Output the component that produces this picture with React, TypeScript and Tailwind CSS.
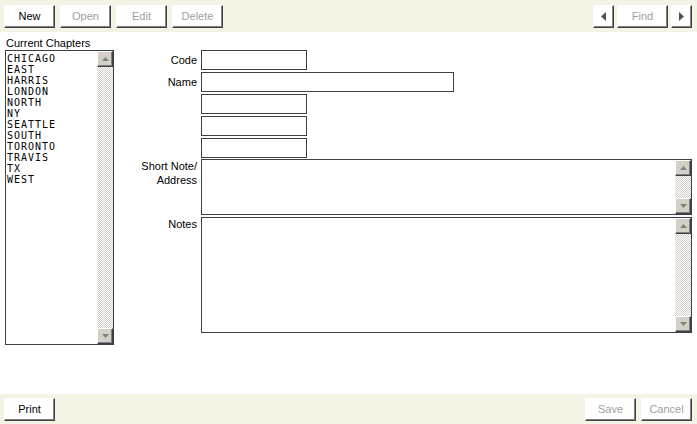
const chapters = ["CHICAGO", "EAST", "HARRIS", "LONDON", "NORTH", "NY", "SEATTLE", "SOUTH", "TORONTO", "TRAVIS", "TX", "WEST"];

const font = { fontFamily: '"Liberation Sans", Arial, sans-serif' };

const Btn = ({ label, disabled, wide = true }: { label: string; disabled?: boolean; wide?: boolean }) => (
  <button
    className={`${wide ? "w-[51px]" : "w-[21px]"} h-[23px] flex items-center justify-center bg-white border border-t-white border-l-white border-r-[#404040] border-b-[#404040] shadow-[inset_-1px_-1px_0_#808080] text-[11px] ${disabled ? "text-[#a0a0a0]" : "text-black"}`}
  >
    {label}
  </button>
);

const Arrow = ({ dir }: { dir: "left" | "right" }) => (
  <button className="w-[21px] h-[23px] flex items-center justify-center bg-white border border-t-white border-l-white border-r-[#404040] border-b-[#404040] shadow-[inset_-1px_-1px_0_#808080]">
    <svg width="5" height="9" viewBox="0 0 5 9">
      {dir === "left" ? <path d="M5 0 L0 4.5 L5 9 Z" fill="#505050" /> : <path d="M0 0 L5 4.5 L0 9 Z" fill="#505050" />}
    </svg>
  </button>
);

const ScrollBtn = ({ up }: { up?: boolean }) => (
  <div className="w-[16px] h-[16px] shrink-0 bg-[#d4d0c8] border border-t-white border-l-white border-r-[#404040] border-b-[#404040] shadow-[inset_-1px_-1px_0_#808080] flex items-center justify-center">
    <svg width="7" height="4" viewBox="0 0 7 4">
      {up ? <path d="M0 4 L3.5 0 L7 4 Z" fill="#808080" /> : <path d="M0 0 L3.5 4 L7 0 Z" fill="#808080" />}
    </svg>
  </div>
);

const ScrollBar = () => (
  <div className="w-[16px] flex flex-col shrink-0">
    <ScrollBtn up />
    <div className="flex-1 bg-[repeating-conic-gradient(#d4d0c8_0%_25%,#ffffff_0%_50%)] bg-[length:2px_2px]" />
    <ScrollBtn />
  </div>
);

const Area = ({ h }: { h: string }) => (
  <div className={`${h} flex border border-[#404040] bg-white`}>
    <div className="flex-1" />
    <ScrollBar />
  </div>
);

export default function App() {
  return (
    <div className="w-[697px] h-[424px] flex flex-col bg-white text-black" style={font}>
      {/* top toolbar */}
      <div className="h-[32px] shrink-0 bg-[#f5f2e6] flex items-start pt-[5px] px-[4px]">
        <div className="flex gap-[5px]">
          <Btn label="New" />
          <Btn label="Open" disabled />
          <Btn label="Edit" disabled />
          <Btn label="Delete" disabled />
        </div>
        <div className="ml-auto mr-[1px] flex gap-[3px]">
          <Arrow dir="left" />
          <Btn label="Find" disabled />
          <Arrow dir="right" />
        </div>
      </div>

      {/* body */}
      <div className="flex-1 flex">
        <div className="pl-[5px] pt-[4px]">
          <div className="text-[11px] leading-[14px] pl-[1px]">Current Chapters</div>
          <div className="w-[109px] h-[295px] flex border border-[#404040]">
            <div className="flex-1 pl-[1px] pt-[2px] text-[10px] tracking-[1px] leading-[11px]" style={{ fontFamily: '"DejaVu Sans Mono", monospace' }}>
              {chapters.map((c) => (
                <div key={c}>{c}</div>
              ))}
            </div>
            <ScrollBar />
          </div>
        </div>

        <div className="flex-1 pt-[18px] pr-[5px] grid grid-cols-[83px_1fr] gap-x-[4px] gap-y-[2px] content-start text-[11px]">
          <div className="text-right self-center">Code</div>
          <input className="w-[106px] h-[20px] border border-[#404040] bg-white" />
          <div className="text-right self-center">Name</div>
          <input className="w-[253px] h-[20px] border border-[#404040] bg-white" />
          <div />
          <input className="w-[106px] h-[20px] border border-[#404040] bg-white" />
          <div />
          <input className="w-[106px] h-[20px] border border-[#404040] bg-white" />
          <div />
          <input className="w-[106px] h-[20px] border border-[#404040] bg-white" />
          <div className="text-right leading-[14px] -mt-[1px]">
            Short Note/
            <br />
            Address
          </div>
          <div className="-mt-[1px]">
            <Area h="h-[56px]" />
          </div>
          <div className="text-right leading-[14px]">Notes</div>
          <Area h="h-[116px]" />
        </div>
      </div>

      {/* bottom toolbar */}
      <div className="h-[30px] shrink-0 bg-[#f5f2e6] flex items-start pt-[4px] px-[4px]">
        <Btn label="Print" />
        <div className="ml-auto mr-[1px] flex gap-[5px]">
          <Btn label="Save" disabled />
          <Btn label="Cancel" disabled />
        </div>
      </div>
    </div>
  );
}
